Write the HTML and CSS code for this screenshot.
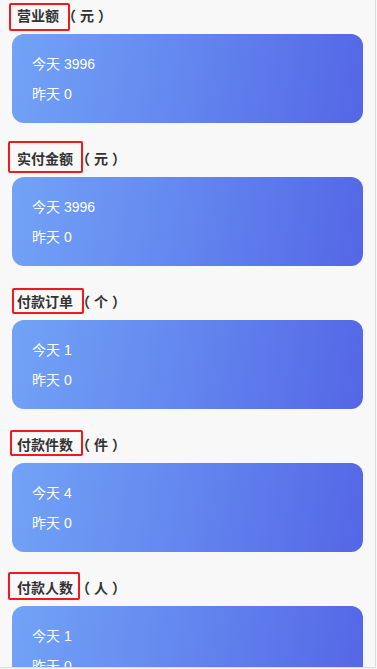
FILE: index.html
```html
<!DOCTYPE html>
<html lang="zh">
<head>
<meta charset="utf-8">
<title>数据</title>
<link rel="stylesheet" href="styles.css">
</head>
<body>
<div class="page">
  <section class="stat">
    <div class="stat-title"><span class="hl hl-1"></span><span class="name">营业额</span><span class="unit">（元）</span></div>
    <div class="card"><div>今天 3996</div><div>昨天 0</div></div>
  </section>
  <section class="stat">
    <div class="stat-title"><span class="hl hl-2"></span><span class="name">实付金额</span><span class="unit">（元）</span></div>
    <div class="card"><div>今天 3996</div><div>昨天 0</div></div>
  </section>
  <section class="stat">
    <div class="stat-title"><span class="hl hl-3"></span><span class="name">付款订单</span><span class="unit">（个）</span></div>
    <div class="card"><div>今天 1</div><div>昨天 0</div></div>
  </section>
  <section class="stat">
    <div class="stat-title"><span class="hl hl-4"></span><span class="name">付款件数</span><span class="unit">（件）</span></div>
    <div class="card"><div>今天 4</div><div>昨天 0</div></div>
  </section>
  <section class="stat">
    <div class="stat-title"><span class="hl hl-5"></span><span class="name">付款人数</span><span class="unit">（人）</span></div>
    <div class="card"><div>今天 1</div><div>昨天 0</div></div>
  </section>
</div>
</body>
</html>
```
FILE: styles.css
```css
html, body {
  margin: 0;
  padding: 0;
  background: #f8f8f8;
}
body {
  font-family: "Noto Sans CJK SC", "Noto Sans", "Liberation Sans", sans-serif;
}
.page {
  box-sizing: border-box;
  width: 376px;
  height: 669px;
  overflow: hidden;
  border-top: 1px solid #dcdcdc;
  border-right: 1px solid #dcdcdc;
  border-bottom: 1px solid #dcdcdc;
  padding: 0 12px;
  margin-top: -1px;
}
.stat {
  position: relative;
  margin-bottom: 20px;
}
.stat-title {
  position: relative;
  height: 30px;
  line-height: 30px;
  padding-left: 5px;
  font-size: 14px;
  font-weight: bold;
  color: #333;
}
.unit {
  display: inline-block;
  margin-left: 3px;
  letter-spacing: 4px;
}
.hl {
  position: absolute;
  box-sizing: border-box;
  border: 2px solid #f0191b;
  border-radius: 2px;
}
.hl-1 { left: -3px; top: 3px; width: 61px; height: 28px; }
.hl-2 { left: -4px; top: -2px; width: 75px; height: 32px; }
.hl-3 { left: 0; top: 2px; width: 72px; height: 26px; }
.hl-4 { left: -2px; top: 1px; width: 73px; height: 26px; }
.hl-5 { left: -4px; top: 0; width: 72px; height: 28px; }
.card {
  margin-top: 4px;
  height: 89px;
  box-sizing: border-box;
  padding: 15px 20px 14px;
  border-radius: 12px;
  background: linear-gradient(100deg, #72a3f6 0%, #6489ef 45%, #5466e6 100%);
  color: #fff;
  font-family: "Liberation Sans", "Noto Sans CJK SC", sans-serif;
  font-size: 14px;
  line-height: 30px;
}
```
